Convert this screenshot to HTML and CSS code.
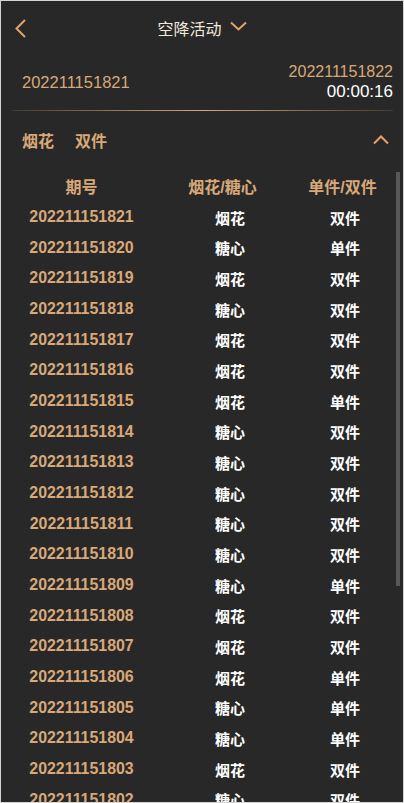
FILE: index.html
```html
<!DOCTYPE html>
<html lang="zh">
<head>
<meta charset="utf-8">
<title>空降活动</title>
<link rel="stylesheet" href="styles.css">
</head>
<body>
<div class="page">
  <header class="topbar">
    <div class="back">
      <svg width="12" height="19" viewBox="0 0 12 19"><polyline points="10,1 1.5,9.5 10,18" fill="none" stroke="#e0a46c" stroke-width="2"/></svg>
    </div>
    <div class="title">
      <span>空降活动</span>
      <svg width="17" height="10" viewBox="0 0 17 10"><polyline points="1,1.5 8.5,8.5 16,1.5" fill="none" stroke="#e0a46c" stroke-width="2"/></svg>
    </div>
    <div></div>
  </header>

  <section class="info">
    <div class="cur">202211151821</div>
    <div class="next">
      <div class="next-no">202211151822</div>
      <div class="timer">00:00:16</div>
    </div>
  </section>
  <div class="divider"></div>

  <section class="summary">
    <div class="tags"><span>烟花</span><span>双件</span></div>
    <svg width="16" height="10" viewBox="0 0 16 10"><polyline points="1,8.5 8,1.5 15,8.5" fill="none" stroke="#e0a46c" stroke-width="2"/></svg>
  </section>

  <div class="list-wrap">
    <div class="list">
      <div class="row head"><span>期号</span><span>烟花/糖心</span><span>单件/双件</span></div>
      <div class="row"><span class="no">202211151821</span><span>烟花</span><span>双件</span></div>
      <div class="row"><span class="no">202211151820</span><span>糖心</span><span>单件</span></div>
      <div class="row"><span class="no">202211151819</span><span>烟花</span><span>双件</span></div>
      <div class="row"><span class="no">202211151818</span><span>糖心</span><span>双件</span></div>
      <div class="row"><span class="no">202211151817</span><span>烟花</span><span>双件</span></div>
      <div class="row"><span class="no">202211151816</span><span>烟花</span><span>双件</span></div>
      <div class="row"><span class="no">202211151815</span><span>烟花</span><span>单件</span></div>
      <div class="row"><span class="no">202211151814</span><span>糖心</span><span>双件</span></div>
      <div class="row"><span class="no">202211151813</span><span>糖心</span><span>双件</span></div>
      <div class="row"><span class="no">202211151812</span><span>糖心</span><span>双件</span></div>
      <div class="row"><span class="no">202211151811</span><span>糖心</span><span>双件</span></div>
      <div class="row"><span class="no">202211151810</span><span>糖心</span><span>双件</span></div>
      <div class="row"><span class="no">202211151809</span><span>糖心</span><span>单件</span></div>
      <div class="row"><span class="no">202211151808</span><span>烟花</span><span>双件</span></div>
      <div class="row"><span class="no">202211151807</span><span>烟花</span><span>双件</span></div>
      <div class="row"><span class="no">202211151806</span><span>烟花</span><span>单件</span></div>
      <div class="row"><span class="no">202211151805</span><span>糖心</span><span>单件</span></div>
      <div class="row"><span class="no">202211151804</span><span>糖心</span><span>单件</span></div>
      <div class="row"><span class="no">202211151803</span><span>烟花</span><span>双件</span></div>
      <div class="row"><span class="no">202211151802</span><span>糖心</span><span>双件</span></div>
    </div>
    <div class="thumb"></div>
  </div>
</div>
</body>
</html>
```

FILE: styles.css
```css
* { box-sizing: border-box; }
html, body { margin: 0; padding: 0; background: #d4d4d4; }
body {
  font-family: "Liberation Sans", "Noto Sans CJK SC", sans-serif;
  width: 404px;
  height: 803px;
  overflow: hidden;
}
.page {
  width: 404px;
  height: 803px;
  border: 1px solid #d4d4d4;
  background: #282828;
  display: flex;
  flex-direction: column;
  overflow: hidden;
}
.topbar {
  height: 53px;
  display: grid;
  grid-template-columns: 1fr auto 1fr;
  align-items: center;
}
.back { padding-left: 14px; display: flex; align-items: center; padding-top: 1px; }
.title {
  display: flex;
  align-items: center;
  gap: 8px;
  color: #f2e8de;
  font-size: 16px;
}
.title svg { margin-top: -3px; }
.info {
  height: 56px;
  display: flex;
  justify-content: space-between;
  align-items: center;
  padding: 0 10px 0 21px;
}
.cur { color: #d8a878; font-size: 16.5px; }
.next { text-align: right; }
.next-no { color: #d8a878; font-size: 16px; line-height: 20px; }
.timer { color: #ffffff; font-size: 17px; line-height: 20px; }
.divider {
  height: 1px;
  margin: 0 10px 0 11px;
  background: linear-gradient(90deg, rgba(216,168,120,0.15), #d8a878 50%, rgba(216,168,120,0.15));
}
.summary {
  height: 59px;
  display: flex;
  align-items: center;
  justify-content: space-between;
  padding: 0 14px 2px 21px;
}
.summary svg { margin-top: 1px; }
.tags { display: flex; gap: 21px; color: #d8a878; font-weight: bold; font-size: 16px; }
.list-wrap {
  flex: 1;
  position: relative;
  overflow: hidden;
}
.list {
  height: 100%;
  overflow: hidden;
  padding-left: 3px;
  padding-top: 1px;
}
.thumb {
  position: absolute;
  left: 395px;
  top: 2px;
  width: 4px;
  height: 414px;
  background: #585858;
}
.row {
  height: 30.68px;
  display: grid;
  grid-template-columns: 155px 136px 97px;
  align-items: center;
  text-align: center;
  color: #ffffff;
  font-weight: bold;
  font-size: 15px;
}
.row span:nth-child(2) { padding-left: 6px; }
.row span:nth-child(3) { padding-left: 3px; }
.row.head { color: #d8a878; font-size: 16px; }
.row.head span:nth-child(2) { padding-left: 0; padding-right: 9px; }
.row.head span:nth-child(3) { padding-left: 0; padding-right: 2px; }
.row .no { color: #d8a878; font-size: 15.9px; }
```
